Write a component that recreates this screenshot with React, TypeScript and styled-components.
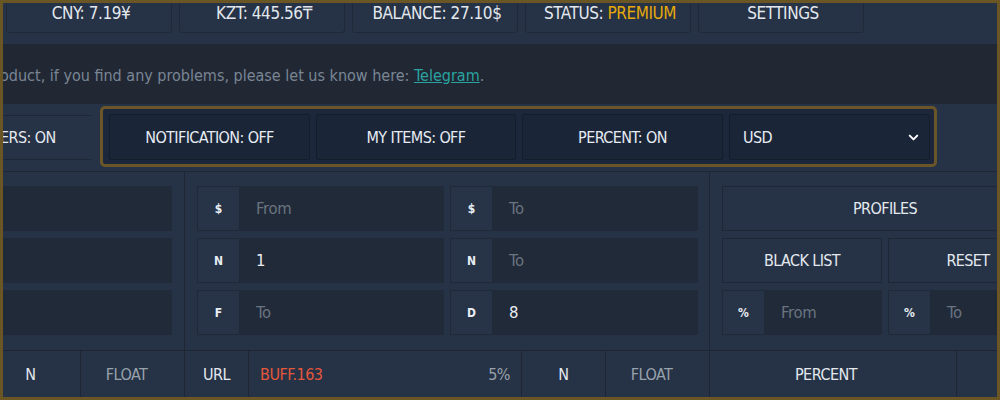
import React from "react";
import styled, { createGlobalStyle } from "styled-components";
import { ChevronDown } from "lucide-react";

const Global = createGlobalStyle`
  html, body { margin: 0; padding: 0; background: #263245; }
  body { font-family: "Liberation Sans Narrow", "DejaVu Sans Condensed", "Liberation Sans", sans-serif; }
  * { box-sizing: border-box; }
`;

const Frame = styled.div`
  width: 1000px;
  height: 400px;
  border: 3px solid #6a5525;
  overflow: hidden;
  background: #263245;
  display: flex;
  flex-direction: column;
  color: #e3e9ef;
`;

const TopBar = styled.div`
  margin-top: -10px;
  height: 51px;
  flex: none;
  display: flex;
  gap: 7px;
  padding: 0 0 11px 3px;
  background: #263245;
`;

const TopButton = styled.div`
  width: 166px;
  height: 40px;
  padding: 0 0 1px 4px;
  border: 1px solid #1f2938;
  border-radius: 3px;
  display: flex;
  align-items: center;
  justify-content: center;
  font-size: 17px;
  letter-spacing: -0.45px;
  color: #e2e8ee;
`;

const Gold = styled.span`
  color: #e5a90a;
`;

const Notice = styled.div`
  height: 60px;
  flex: none;
  background: #212834;
  display: flex;
  align-items: center;
  padding-top: 2px;
  font-size: 16px;
  letter-spacing: 0;
  color: #7a8694;
`;

const NoticeText = styled.span`
  margin-left: -3px;
  white-space: nowrap;
`;

const TgLink = styled.a`
  color: #2aa3a1;
  text-decoration: underline;
`;

const ControlsRow = styled.div`
  height: 68px;
  flex: none;
  display: flex;
  align-items: flex-start;
  gap: 8px;
  padding-top: 2px;
  border-bottom: 1px solid #1f2735;
`;

const SideButton = styled.div`
  width: 89px;
  height: 45px;
  margin-top: 9px;
  border-top: 1px solid #1f2836;
  border-bottom: 1px solid #1f2836;
  display: flex;
  align-items: center;
  font-size: 16px;
  letter-spacing: -0.6px;
  color: #e3e9ef;
  text-indent: -3px;
`;

const Group = styled.div`
  display: flex;
  gap: 6px;
  padding: 5px 4px 4px 6px;
  border: 3px solid #6b5629;
  border-radius: 5px;
  background: #1c273b;
`;

const GroupButton = styled.div<{ $w: number; $left?: boolean }>`
  width: ${(p) => p.$w}px;
  height: 46px;
  background: #1b2538;
  border: 1px solid #151d2b;
  border-radius: 2px;
  display: flex;
  align-items: center;
  justify-content: ${(p) => (p.$left ? "space-between" : "center")};
  padding: ${(p) => (p.$left ? "0 8px 0 13px" : "0")};
  font-size: 16px;
  letter-spacing: -0.6px;
  color: #e6ecf2;
`;

const Filters = styled.div`
  height: 179px;
  flex: none;
  display: flex;
  border-bottom: 1px solid #1e2633;
`;

const LeftCol = styled.div`
  width: 182px;
  flex: none;
  padding: 14px 12px 0 0;
  border-right: 1px solid #1e2633;
  display: flex;
  flex-direction: column;
  gap: 7px;
`;

const MidCol = styled.div`
  width: 525px;
  flex: none;
  padding: 14px 11px 0 12px;
  border-right: 1px solid #1e2633;
  display: grid;
  grid-template-columns: 247px 248px;
  grid-auto-rows: 45px;
  column-gap: 6px;
  row-gap: 7px;
`;

const RightCol = styled.div`
  flex: none;
  padding: 14px 0 0 12px;
  display: grid;
  grid-template-columns: 160px 160px;
  grid-auto-rows: 45px;
  column-gap: 6px;
  row-gap: 7px;
`;

const PlainInput = styled.div`
  height: 45px;
  background: #212a38;
`;

const InputGroup = styled.div`
  display: flex;
  height: 45px;
`;

const Addon = styled.div`
  width: 43px;
  flex: none;
  display: flex;
  align-items: center;
  justify-content: center;
  background: #273346;
  border: 1px solid #202938;
  font-size: 12px;
  font-weight: bold;
  color: #e8eef4;
`;

const Field = styled.div<{ $filled?: boolean }>`
  flex: 1;
  display: flex;
  align-items: center;
  padding-left: 16px;
  background: #212a38;
  font-size: 16.5px;
  letter-spacing: -0.3px;
  color: ${(p) => (p.$filled ? "#e9eef3" : "#6a7481")};
`;

const ActionButton = styled.div<{ $span?: number }>`
  grid-column: span ${(p) => p.$span ?? 1};
  display: flex;
  align-items: center;
  justify-content: center;
  border: 1px solid #1e2735;
  font-size: 16px;
  letter-spacing: -0.6px;
  color: #e3e9ef;
`;

const HeaderRow = styled.div`
  flex: 1;
  display: flex;
`;

const Cell = styled.div<{ $w?: number; $pr?: number; $muted?: boolean; $between?: boolean }>`
  width: ${(p) => (p.$w ? `${p.$w}px` : "auto")};
  flex: ${(p) => (p.$w ? "none" : "1")};
  border-right: ${(p) => (p.$w ? "1px solid #1e2633" : "none")};
  display: flex;
  align-items: center;
  justify-content: ${(p) => (p.$between ? "space-between" : "center")};
  padding: ${(p) => (p.$between ? "0 11px" : `0 ${p.$pr ?? 0}px 0 0`)};
  font-size: 16px;
  letter-spacing: -0.5px;
  color: ${(p) => (p.$muted ? "#98a2ad" : "#e3e9ef")};
`;

const Red = styled.span`
  color: #e4573c;
`;

const Muted = styled.span`
  color: #98a2ad;
`;

export default function App() {
  return (
    <>
      <Global />
      <Frame>
        <TopBar>
          <TopButton>CNY: 7.19¥</TopButton>
          <TopButton>KZT: 445.56₸</TopButton>
          <TopButton>BALANCE: 27.10$</TopButton>
          <TopButton>
            STATUS:&nbsp;<Gold>PREMIUM</Gold>
          </TopButton>
          <TopButton>SETTINGS</TopButton>
        </TopBar>
        <Notice>
          <NoticeText>
            oduct, if you find any problems, please let us know here: <TgLink>Telegram</TgLink>.
          </NoticeText>
        </Notice>
        <ControlsRow>
          <SideButton>ERS: ON</SideButton>
          <Group>
            <GroupButton $w={201}>NOTIFICATION: OFF</GroupButton>
            <GroupButton $w={200}>MY ITEMS: OFF</GroupButton>
            <GroupButton $w={201}>PERCENT: ON</GroupButton>
            <GroupButton $w={201} $left>
              USD
              <ChevronDown size={15} strokeWidth={3.2} color="#ffffff" />
            </GroupButton>
          </Group>
        </ControlsRow>
        <Filters>
          <LeftCol>
            <PlainInput />
            <PlainInput />
            <PlainInput />
          </LeftCol>
          <MidCol>
            <InputGroup>
              <Addon>$</Addon>
              <Field>From</Field>
            </InputGroup>
            <InputGroup>
              <Addon>$</Addon>
              <Field>To</Field>
            </InputGroup>
            <InputGroup>
              <Addon>N</Addon>
              <Field $filled>1</Field>
            </InputGroup>
            <InputGroup>
              <Addon>N</Addon>
              <Field>To</Field>
            </InputGroup>
            <InputGroup>
              <Addon>F</Addon>
              <Field>To</Field>
            </InputGroup>
            <InputGroup>
              <Addon>D</Addon>
              <Field $filled>8</Field>
            </InputGroup>
          </MidCol>
          <RightCol>
            <ActionButton $span={2}>PROFILES</ActionButton>
            <ActionButton>BLACK LIST</ActionButton>
            <ActionButton>RESET</ActionButton>
            <InputGroup>
              <Addon>%</Addon>
              <Field>From</Field>
            </InputGroup>
            <InputGroup>
              <Addon>%</Addon>
              <Field>To</Field>
            </InputGroup>
          </RightCol>
        </Filters>
        <HeaderRow>
          <Cell $w={78} $pr={22}>N</Cell>
          <Cell $w={104} $pr={12} $muted>FLOAT</Cell>
          <Cell $w={64}>URL</Cell>
          <Cell $w={273} $between>
            <Red>BUFF.163</Red>
            <Muted>5%</Muted>
          </Cell>
          <Cell $w={84}>N</Cell>
          <Cell $w={104} $pr={12} $muted>FLOAT</Cell>
          <Cell $w={247} $pr={14}>PERCENT</Cell>
          <Cell />
        </HeaderRow>
      </Frame>
    </>
  );
}
